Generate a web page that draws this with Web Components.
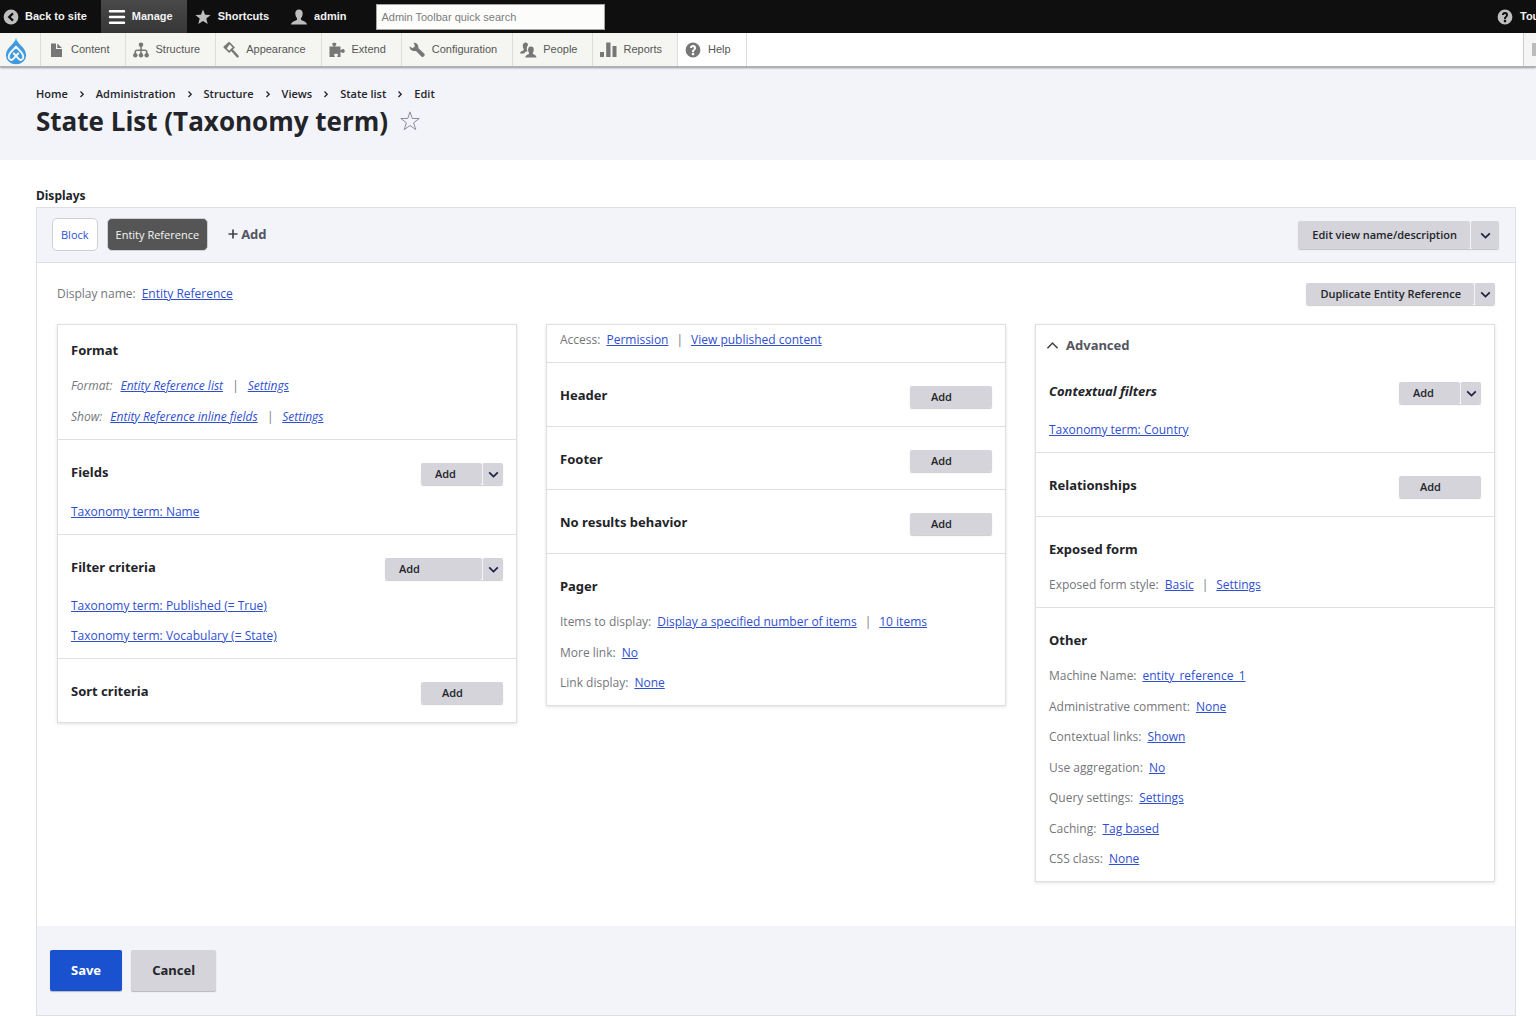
<!DOCTYPE html>
<html lang="en">
<head>
<meta charset="utf-8">
<title>State List (Taxonomy term)</title>
<style>
:root {
  --ink: #232429; --muted: #75767b; --link: #2f4fd0; --tint: #f3f4f9; --line: #dedfe4; --grey: #d4d4da;
  --ui: "Open Sans", sans-serif; --head: "Noto Sans", sans-serif; --bar: "Liberation Sans", Arial, sans-serif;
}
* { box-sizing: border-box; }
body { margin: 0; background: #fff; color: var(--ink); font: 12px/18px var(--ui); overflow-x: hidden; }
</style>
</head>
<body>
<admin-bar>
  <bar-item icon="back" first>Back to site</bar-item>
  <bar-item icon="menu" active>Manage</bar-item>
  <bar-item icon="star">Shortcuts</bar-item>
  <bar-item icon="person">admin</bar-item>
  <bar-search></bar-search>
  <bar-item icon="help" slot="end">Tour</bar-item>
</admin-bar>
<admin-tray>
  <tray-item icon="file">Content</tray-item>
  <tray-item icon="tree">Structure</tray-item>
  <tray-item icon="brush">Appearance</tray-item>
  <tray-item icon="puzzle">Extend</tray-item>
  <tray-item icon="wrench">Configuration</tray-item>
  <tray-item icon="people">People</tray-item>
  <tray-item icon="chart">Reports</tray-item>
  <tray-item icon="help" light>Help</tray-item>
</admin-tray>
<page-header heading="State List (Taxonomy term)">
  <a href="#">Home</a><ui-icon name="crumb"></ui-icon><a href="#">Administration</a><ui-icon name="crumb"></ui-icon><a href="#">Structure</a><ui-icon name="crumb"></ui-icon><a href="#">Views</a><ui-icon name="crumb"></ui-icon><a href="#">State list</a><ui-icon name="crumb"></ui-icon><a href="#">Edit</a>
</page-header>
<views-editor>
  <display-tab slot="tabs">Block</display-tab>
  <display-tab slot="tabs" active>Entity Reference</display-tab>
  <add-display slot="tabs">Add</add-display>
  <drop-button slot="tools" large menu>Edit view name/description</drop-button>
  <setting-row slot="name" label="Display name:"><a href="#">Entity Reference</a></setting-row>
  <drop-button slot="duplicate" menu>Duplicate Entity Reference</drop-button>

  <views-column>
    <views-section heading="Format" first>
      <setting-row label="Format:" italic><a href="#">Entity Reference list</a><span>|</span><a href="#">Settings</a></setting-row>
      <setting-row label="Show:" italic><a href="#">Entity Reference inline fields</a><span>|</span><a href="#">Settings</a></setting-row>
    </views-section>
    <views-section heading="Fields" tools>
      <drop-button slot="tools" compact menu>Add</drop-button>
      <setting-row><a href="#">Taxonomy term: Name</a></setting-row>
    </views-section>
    <views-section heading="Filter criteria" tools>
      <drop-button slot="tools" wide menu>Add</drop-button>
      <setting-row><a href="#">Taxonomy term: Published (= True)</a></setting-row>
      <setting-row><a href="#">Taxonomy term: Vocabulary (= State)</a></setting-row>
    </views-section>
    <views-section heading="Sort criteria" tools>
      <drop-button slot="tools" compact>Add</drop-button>
    </views-section>
  </views-column>

  <views-column>
    <views-section bare>
      <setting-row label="Access:"><a href="#">Permission</a><span>|</span><a href="#">View published content</a></setting-row>
    </views-section>
    <views-section heading="Header" tools><drop-button slot="tools" compact>Add</drop-button></views-section>
    <views-section heading="Footer" tools><drop-button slot="tools" compact>Add</drop-button></views-section>
    <views-section heading="No results behavior" tools><drop-button slot="tools" compact>Add</drop-button></views-section>
    <views-section heading="Pager">
      <setting-row label="Items to display:"><a href="#">Display a specified number of items</a><span>|</span><a href="#">10 items</a></setting-row>
      <setting-row label="More link:"><a href="#">No</a></setting-row>
      <setting-row label="Link display:"><a href="#">None</a></setting-row>
    </views-section>
  </views-column>

  <views-column fold="Advanced">
    <views-section heading="Contextual filters" tools italic>
      <drop-button slot="tools" compact menu>Add</drop-button>
      <setting-row><a href="#">Taxonomy term: Country</a></setting-row>
    </views-section>
    <views-section heading="Relationships" tools><drop-button slot="tools" compact>Add</drop-button></views-section>
    <views-section heading="Exposed form">
      <setting-row label="Exposed form style:"><a href="#">Basic</a><span>|</span><a href="#">Settings</a></setting-row>
    </views-section>
    <views-section heading="Other">
      <setting-row label="Machine Name:"><a href="#">entity_reference_1</a></setting-row>
      <setting-row label="Administrative comment:"><a href="#">None</a></setting-row>
      <setting-row label="Contextual links:"><a href="#">Shown</a></setting-row>
      <setting-row label="Use aggregation:"><a href="#">No</a></setting-row>
      <setting-row label="Query settings:"><a href="#">Settings</a></setting-row>
      <setting-row label="Caching:"><a href="#">Tag based</a></setting-row>
      <setting-row label="CSS class:"><a href="#">None</a></setting-row>
    </views-section>
  </views-column>

  <form-button slot="actions" primary>Save</form-button>
  <form-button slot="actions">Cancel</form-button>
</views-editor>

<script>
const ICONS = {
  back: '<circle cx="8" cy="8" r="7.4" fill="currentColor"/><path d="M10 4.4 6.2 8 10 11.6" fill="none" stroke="#0f0f0f" stroke-width="2.2"/>',
  menu: '<path d="M1 2.2h14M1 8h14M1 13.8h14" stroke="currentColor" stroke-width="2.4" stroke-linecap="round"/>',
  star: '<path d="M8 .5l2.1 5.2 5.5.3-4.3 3.5 1.4 5.6L8 12l-4.7 3.1 1.4-5.6L.4 6l5.5-.3z" fill="currentColor"/>',
  person: '<path d="M8 .5c2.500 0 3.900 1.800 3.700 4.300-.1 1.800-.8 3.200-1.600 4.200-.3.700-.3 1.500.2 1.900 1.300.9 5.300 1.400 5.700 4.600H0c.4-3.200 4.400-3.700 5.700-4.600.5-.4.5-1.200.2-1.900-.8-1-1.500-2.400-1.600-4.200C4.100 2.300 5.500.5 8 .5z" fill="currentColor"/>',
  help: '<path fill="currentColor" d="M8 .6a7.400 7.400 0 1 0 0 14.800A7.400 7.400 0 0 0 8 .6zM11 6c0 .6-.2 1.100-.5 1.600-.3.400-.7.800-1.100 1.100-.5.400-.4.600-.4 1.300H7c0-.9.100-1.500.6-2 .5-.6 1.400-.9 1.400-2a1 1 0 0 0-2 0H5a3 3 0 0 1 6 0zM9.200 12.600c0 .3-.3.600-.6.600H7.400a.6.600 0 0 1-.6-.6v-1.200c0-.3.300-.6.600-.6h1.200c.3 0 .6.300.6.600z"/>',
  file: '<path d="M3 1.500h5V7h6v8H3zM9.300 1.500 14 6H9.300z" fill="currentColor"/>',
  tree: '<path d="M8 3v10M2.200 13v-2.800q0-2 2-2h7.600q2 0 2 2V13" fill="none" stroke="currentColor" stroke-width="1.500"/><g fill="currentColor"><circle cx="8" cy="2.800" r="2.300"/><circle cx="2.300" cy="13.300" r="2.200"/><circle cx="8" cy="13.300" r="2.200"/><circle cx="13.700" cy="13.300" r="2.200"/></g>',
  brush: '<path d="M1.800 5.500 6.600 1.200 10.800 5.400 6.200 9.800z" fill="none" stroke="currentColor" stroke-width="1.600"/><path d="M.2 5 5.600 0l1.600 1.400L3 7.600z" fill="currentColor"/><path d="M8.800 8l5.800 6.400" stroke="currentColor" stroke-width="2.400" stroke-linecap="round"/>',
  puzzle: '<path d="M.5 4.500h4.200C4.200 3.600 3 2.800 3.200 1.800 3.500.5 7 .5 7.300 1.800c.2 1-.9 1.800-1.300 2.700h5.500v3.700c.8-.1 1.500-1.200 2.600-1.200 2.200 0 2.200 4 0 4-1.100 0-1.800-1.100-2.600-1.200V15H8.200c-.2-1 .9-1.300.8-2.200-.1-1.300-3.800-1.300-3.900 0-.1.900 1 1.200.8 2.200H.5z" fill="currentColor"/>',
  wrench: '<path d="M4.600.7c2.600-.3 4.900 1.600 4.800 4.500 0 .6-.1.900.4 1.300l5.300 5.100c1.700 1.800-.8 4.400-2.700 2.800L7.200 9.200c-.4-.4-.8-.3-1.300-.2C3 9.300.4 7.200.5 4.200l2.900 2.100L6 4.200z" fill="currentColor"/>',
  people: '<path d="M5.500.6c2 0 2.600 1.300 2.400 3C6.500 4.800 6.400 7 7.500 9c-1.700.8-3 1.400-3.300 2.400H0c.2-2.200 2.500-2.500 3.600-3.200.5-.4.200-1-.1-1.500C2.300 4.900 2.500.6 5.500.6z" fill="currentColor"/><path d="M11 4.400c3.200 0 3.300 3.700 2.100 6-.3.600-.5 1.200 0 1.600 1 .7 3.100.9 3.400 3.500H5.300c.3-2.600 2.500-2.800 3.500-3.500.5-.4.300-1 0-1.600-1.200-2.300-1-6 2.200-6z" fill="currentColor"/>',
  chart: '<path d="M0 10h4v5H0zM6.200 .5h4.300V15H6.200zM12.500 4h4v11h-4z" fill="currentColor"/>',
  crumb: '<path d="M6.500 5.500 9.200 8.200 6.500 11" fill="none" stroke="#232429" stroke-width="1.300"/>',
  down: '<path d="M3.400 5.700 8 10.200l4.600-4.500" fill="none" stroke="#1c2148" stroke-width="1.800"/>',
  up: '<path d="M2.600 11 8 5.400 13.400 11" fill="none" stroke="#44454c" stroke-width="1.700"/>',
  plus: '<path d="M8 3.500v9M3.500 8h9" stroke="#44454c" stroke-width="1.700"/>',
  outline: '<path d="M8 .7l1.800 5.300h5.600l-4.500 3.400 1.700 5.500L8 11.600l-4.600 3.300 1.700-5.500L.6 6h5.600z" fill="none" stroke="#8b8e99" stroke-width=".8"/>',
  drop: '<path fill="#3f9be0" d="M8 0c.5 2.200 1.800 3.300 3.200 4.700 1.900 1.800 3 3.700 3 6A6.200 5.500 0 0 1 8 16.200a6.200 5.500 0 0 1-6.200-5.500c0-2.300 1.100-4.200 3-6C6.200 3.300 7.500 2.200 8 0z"/><path d="M9.700 9.100 6.200 13c-.9 1-2.600.3-2.700-1.300-.1-1.200.4-2 1.200-2.900L8 5.300l3.300 3.500c.8.900 1.300 1.700 1.200 2.900-.1 1.600-1.800 2.300-2.700 1.300L6.300 9.100" fill="none" stroke="#f7f7f4" stroke-width="1.200" stroke-linejoin="round"/>'
};

/* Each element keeps its rules in static css and its markup in render(). */
class Base extends HTMLElement {
  connectedCallback() {
    if (this.shadowRoot) return;
    this.attachShadow({ mode: 'open' }).innerHTML =
      `<style>*{box-sizing:border-box}:host{box-sizing:border-box}${this.constructor.css}</style>${this.render()}`;
  }
  attr(name) { return this.getAttribute(name) || ''; }
}

class UiIcon extends Base {
  static css = ':host{display:inline-block;flex:none;width:16px;height:16px}svg{display:block;width:100%;height:100%;overflow:visible}';
  render() { return `<svg viewBox="0 0 16 16" aria-hidden="true">${ICONS[this.attr('name')]}</svg>`; }
}

class AdminBar extends Base {
  static css = `:host{display:block;background:#0f0f0f;font:bold 11px/33px var(--bar)}
    nav{display:flex;height:33px}.end{margin-left:auto;width:47px;overflow:hidden}`;
  render() { return '<nav aria-label="Toolbar"><slot></slot><div class="end"><slot name="end"></slot></div></nav>'; }
}
class BarItem extends Base {
  static css = `:host{display:block;flex:none;color:#bebebe}
    a{display:flex;align-items:center;gap:7px;height:33px;padding:0 14px 0 8px;color:#f2f2f2;text-decoration:none;white-space:nowrap}
    ui-icon{color:#bebebe}
    :host([first]) a{padding-left:3px;gap:6px}
    :host([active]) a{background:linear-gradient(#494949,#363636)}
    :host([active]) ui-icon{color:#fff}`;
  render() { return `<a href="#"><ui-icon name="${this.attr('icon')}"></ui-icon><slot></slot></a>`; }
}
class BarSearch extends Base {
  static css = `:host{display:flex;align-items:center;padding-left:16px}
    input{width:229px;height:26px;padding:0 4px;border:1px solid #a5a5a5;border-radius:0;background:#fcfcfa;font:11px/24px var(--bar)}
    input::placeholder{color:#7d7d7d;opacity:1}`;
  render() { return '<input type="search" aria-label="Admin Toolbar quick search" placeholder="Admin Toolbar quick search">'; }
}

class AdminTray extends Base {
  static css = `:host{display:block;position:relative;background:#fff;font:11px/33px var(--bar);border-bottom:1px solid #aeb0b5;box-shadow:0 1px 2px rgba(0,0,0,.4)}
    nav{display:flex;height:33px}
    .logo{display:flex;align-items:center;justify-content:center;width:41px;padding:2px 9px 0 0;background:#f5f6f1;border-right:1px solid #ddd}
    .logo ui-icon{width:26px;height:26px}
    .side{margin-left:auto;width:13px;padding:0 0 0 8px;border:0;border-left:1px solid #ccc;background:#f5f5f5}
    .side i{display:block;width:4px;height:13px;background:#bbb}`;
  render() { return '<nav aria-label="Administration"><a class="logo" href="#" aria-label="Drupal"><ui-icon name="drop"></ui-icon></a><slot></slot><button class="side" aria-label="Vertical orientation"><i></i></button></nav>'; }
}
class TrayItem extends Base {
  static css = `:host{display:block;flex:none;background:#f5f6f1;border-right:1px solid #ddd}
    :host([light]){background:#fff}
    a{display:flex;align-items:center;gap:7px;height:33px;padding:0 15px 0 7px;color:#565656;text-decoration:none}
    ui-icon{color:#777}`;
  render() { return `<a href="#"><ui-icon name="${this.attr('icon')}"></ui-icon><slot></slot></a>`; }
}

class PageHeader extends Base {
  static css = `:host{display:block;background:var(--tint);padding:18px 36px 21px;font-weight:bold}
    nav{display:flex;align-items:center;gap:6px;font-size:11px;font-weight:600;line-height:18px}
    ::slotted(a){color:var(--ink);text-decoration:none}
    div{display:flex;align-items:center;gap:12px}
    h1{margin:0;font-size:26px;line-height:36px}
    button{display:flex;padding:0;border:0;background:none}
    button ui-icon{width:20px;height:20px}`;
  render() { return `<nav aria-label="Breadcrumb"><slot></slot></nav><div><h1>${this.attr('heading')}</h1><button aria-label="Add to shortcuts"><ui-icon name="outline"></ui-icon></button></div>`; }
}

class ViewsEditor extends Base {
  static css = `:host{display:block;padding:27px 20px 5px 36px}
    h2{margin:0;font:bold 12px/18px var(--head);padding-bottom:2px}
    .panel{border:1px solid var(--line)}
    .bar,.tabs,.name,.actions{display:flex;align-items:center}
    .bar{justify-content:space-between;height:55px;padding:0 16px 0 15px;background:var(--tint);border-bottom:1px solid var(--line)}
    .tabs{gap:9px;padding-bottom:2px}
    .name{justify-content:space-between;padding:16px 20px 15px}
    .columns{display:grid;grid-template-columns:repeat(3,1fr);gap:29px;align-items:start;padding:0 20px 44px}
    .actions{gap:9px;padding:24px 13px;background:var(--tint)}`;
  render() { return `<h2>Displays</h2><div class="panel">
    <div class="bar"><div class="tabs"><slot name="tabs"></slot></div><slot name="tools"></slot></div>
    <div class="name"><slot name="name"></slot><slot name="duplicate"></slot></div>
    <div class="columns"><slot></slot></div>
    <div class="actions"><slot name="actions"></slot></div></div>`; }
}
class DisplayTab extends Base {
  static css = `:host{display:block}
    a{display:block;padding:0 8px;border:1px solid #cfd0d5;border-radius:5px;background:#fff;color:var(--link);font-size:11px;line-height:31px;text-decoration:none}
    :host([active]) a{background:#555;color:#f5f5f5}`;
  render() { return '<a href="#"><slot></slot></a>'; }
}
class AddDisplay extends Base {
  static css = `:host{display:block;padding-left:8px}
    button{display:flex;align-items:center;padding:0;border:0;background:none;color:#545560;font:bold 13px/20px var(--head)}`;
  render() { return '<button><ui-icon name="plus"></ui-icon><slot></slot></button>'; }
}
class DropButton extends Base {
  static css = `:host{display:flex;flex:none;height:22px;border-radius:2px;box-shadow:0 1px 1px rgba(0,0,0,.2)}
    button{padding:0 13px 0 14px;border:0;background:var(--grey);color:var(--ink);font:600 11px/22px var(--ui);border-radius:2px}
    .main{flex:1;text-align:left}
    .more{display:flex;align-items:center;justify-content:center;flex:none;width:21px;padding:0;border-left:1px solid #f4f4f6}
    .more ui-icon{width:15px;height:15px}
    :host([compact]){width:82px}:host([wide]){width:118px}
    :host([compact]:not([menu])) .main{padding-left:21px}
    :host([large]){height:28px}:host([large]) .more{width:29px}`;
  render() { return `<button class="main"><slot></slot></button>${this.hasAttribute('menu') ? '<button class="more" aria-label="List additional actions"><ui-icon name="down"></ui-icon></button>' : ''}`; }
}
class FormButton extends Base {
  static css = `:host{display:block}
    button{display:block;padding:0 21px;border:0;border-radius:2px;background:var(--grey);color:var(--ink);font:bold 13px/41px var(--head);box-shadow:0 1px 1px rgba(0,0,0,.25)}
    :host([primary]) button{background:#1a51ce;color:#fff}`;
  render() { return '<button><slot></slot></button>'; }
}
class ViewsColumn extends Base {
  static css = `:host{display:block;min-width:0;border:1px solid var(--line);box-shadow:0 1px 3px rgba(0,0,0,.12)}
    summary{display:flex;align-items:center;gap:6px;padding:10px 9px 4px;color:#545560;font:bold 13px/20px var(--head);list-style:none}
    summary ui-icon{width:15px;height:15px}`;
  render() {
    const fold = this.attr('fold');
    return fold ? `<details open><summary><ui-icon name="up"></ui-icon>${fold}</summary><slot></slot></details>` : '<slot></slot>';
  }
}
class ViewsSection extends Base {
  static css = `:host{display:block;padding:17px 13px 7px;border-bottom:1px solid var(--line)}
    :host(:last-child){border-bottom:0}
    :host([first]){padding-top:10px}:host([bare]){padding-top:0}
    header{display:flex;align-items:center;justify-content:space-between;height:30px;margin-bottom:6px}
    :host([tools]) header{margin-bottom:9px}
    :host([tools]:nth-child(odd)) header{margin-bottom:8px}
    h3{margin:0;font:bold 13px/20px var(--head)}
    :host([italic]) h3{font-style:italic}
    ::slotted(drop-button){margin-top:4px}`;
  render() {
    const head = this.hasAttribute('bare') ? '' : `<header><h3>${this.attr('heading')}</h3><slot name="tools"></slot></header>`;
    return `${head}<slot></slot>`;
  }
}
class SettingRow extends Base {
  static css = `:host{--label-gap:6px;--bar-gap:8px;display:flex;align-items:center;height:30px;color:var(--muted);font-size:12px;line-height:18px;white-space:nowrap}
    :host(:nth-child(even)){height:31px}
    :host([italic]){--label-gap:8px;--bar-gap:9px;font-style:italic}
    label{margin-right:var(--label-gap)}
    ::slotted(a){color:var(--link);text-underline-offset:1px}
    ::slotted(span){margin:0 var(--bar-gap)}`;
  render() { const l = this.attr('label'); return `${l ? `<label>${l}</label>` : ''}<slot></slot>`; }
}

customElements.define('ui-icon', UiIcon);
customElements.define('admin-bar', AdminBar);
customElements.define('bar-item', BarItem);
customElements.define('bar-search', BarSearch);
customElements.define('admin-tray', AdminTray);
customElements.define('tray-item', TrayItem);
customElements.define('page-header', PageHeader);
customElements.define('views-editor', ViewsEditor);
customElements.define('display-tab', DisplayTab);
customElements.define('add-display', AddDisplay);
customElements.define('drop-button', DropButton);
customElements.define('form-button', FormButton);
customElements.define('views-column', ViewsColumn);
customElements.define('views-section', ViewsSection);
customElements.define('setting-row', SettingRow);
</script>
</body>
</html>
